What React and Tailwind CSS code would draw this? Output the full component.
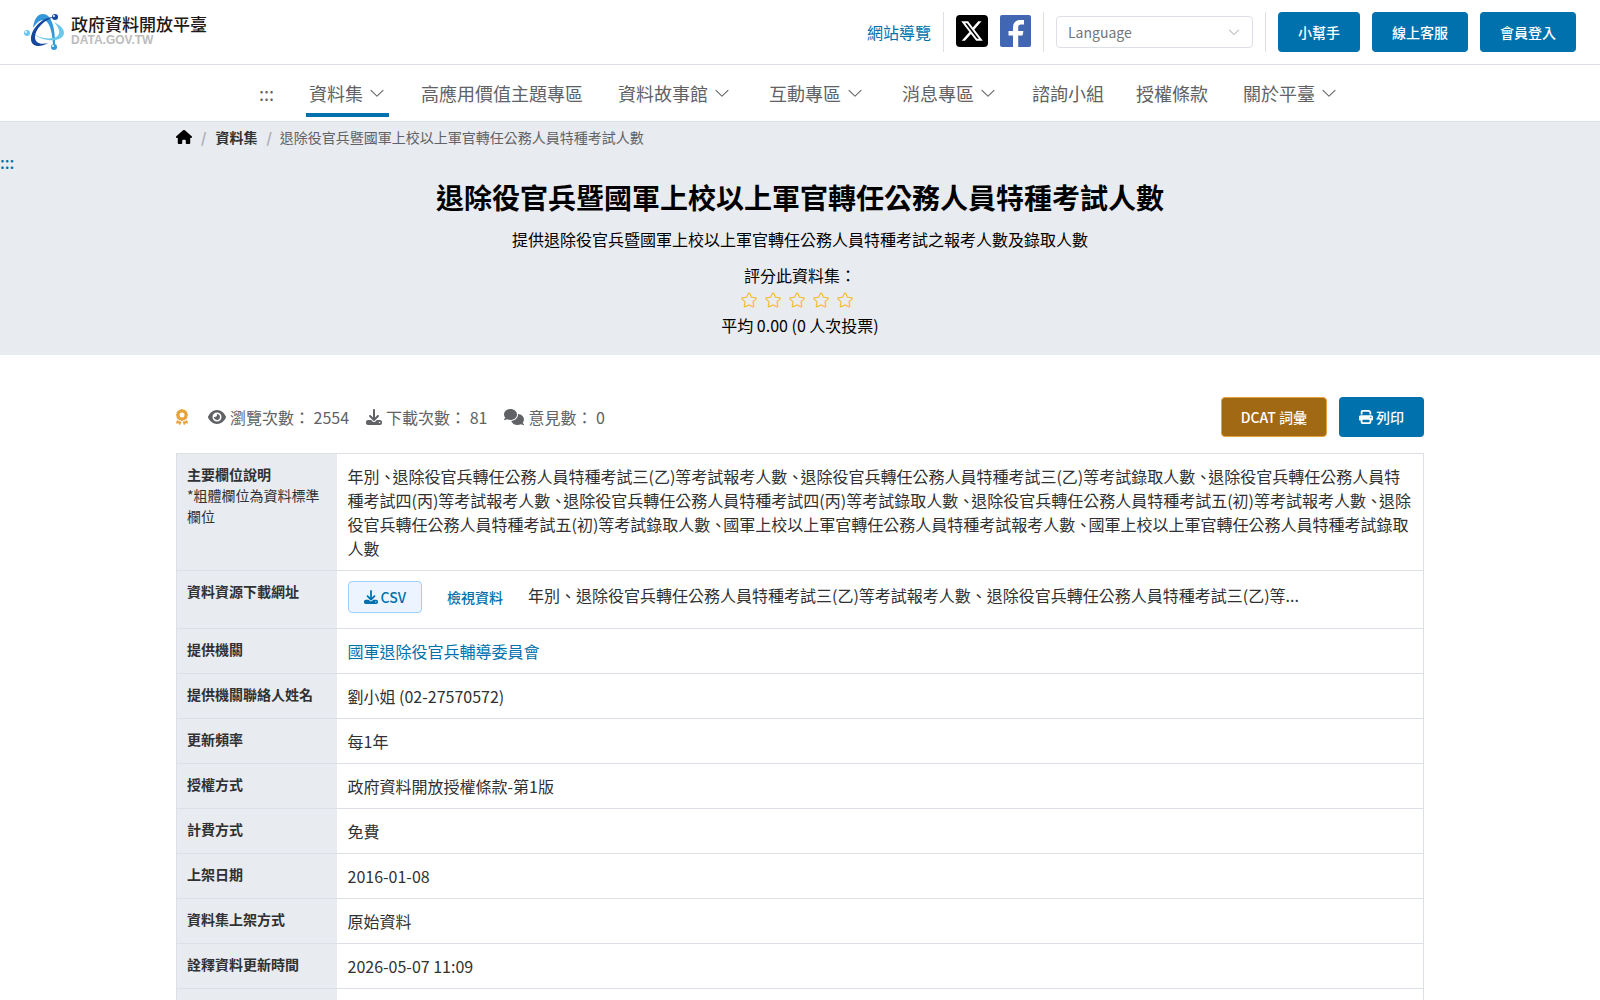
import React from 'react';
import { FaAward, FaComments, FaDownload, FaEye, FaHouse, FaPrint, FaXTwitter } from 'react-icons/fa6';

const navItems = [
  { label: '資料集', menu: true, active: true },
  { label: '高應用價值主題專區' },
  { label: '資料故事館', menu: true },
  { label: '互動專區', menu: true },
  { label: '消息專區', menu: true },
  { label: '諮詢小組' },
  { label: '授權條款' },
  { label: '關於平臺', menu: true },
];

const fields = [
  '年別',
  '退除役官兵轉任公務人員特種考試三(乙)等考試報考人數',
  '退除役官兵轉任公務人員特種考試三(乙)等考試錄取人數',
  '退除役官兵轉任公務人員特種考試四(丙)等考試報考人數',
  '退除役官兵轉任公務人員特種考試四(丙)等考試錄取人數',
  '退除役官兵轉任公務人員特種考試五(初)等考試報考人數',
  '退除役官兵轉任公務人員特種考試五(初)等考試錄取人數',
  '國軍上校以上軍官轉任公務人員特種考試報考人數',
  '國軍上校以上軍官轉任公務人員特種考試錄取人數',
];

const details = [
  { name: '提供機關聯絡人姓名', value: '劉小姐 (02-27570572)' },
  { name: '更新頻率', value: '每1年' },
  { name: '授權方式', value: '政府資料開放授權條款-第1版' },
  { name: '計費方式', value: '免費' },
  { name: '上架日期', value: '2016-01-08' },
  { name: '資料集上架方式', value: '原始資料' },
  { name: '詮釋資料更新時間', value: '2026-05-07 11:09' },
  { name: '', value: '' },
];

const ArrowDown = ({ className }) => (
  <svg className={className} viewBox="0 0 1024 1024" fill="currentColor" aria-hidden="true">
    <path d="M831.872 340.864 512 652.672 192.128 340.864a30.592 30.592 0 0 0-42.752 0 29.12 29.12 0 0 0 0 41.6L489.664 714.24a32 32 0 0 0 44.672 0l340.288-331.712a29.12 29.12 0 0 0 0-41.728 30.592 30.592 0 0 0-42.752 0z" />
  </svg>
);

const Star = () => (
  <svg className="w-[18px] h-[18px]" viewBox="0 0 1024 1024" fill="currentColor" aria-hidden="true">
    <path d="m512 747.84 228.16 119.936a6.4 6.4 0 0 0 9.28-6.72l-43.52-254.08 184.512-179.904a6.4 6.4 0 0 0-3.52-10.88l-255.104-37.12L517.76 147.904a6.4 6.4 0 0 0-11.52 0L392.192 379.072l-255.104 37.12a6.4 6.4 0 0 0-3.52 10.88L318.08 606.976l-43.584 254.08a6.4 6.4 0 0 0 9.28 6.72zM313.6 924.48a70.4 70.4 0 0 1-102.144-74.24l37.888-220.928L88.96 472.96A70.4 70.4 0 0 1 128 352.896l221.76-32.256 99.2-200.96a70.4 70.4 0 0 1 126.208 0l99.2 200.96 221.824 32.256a70.4 70.4 0 0 1 39.04 120.064L774.72 629.376l37.888 220.928a70.4 70.4 0 0 1-102.144 74.24L512 820.096l-198.4 104.32z" />
  </svg>
);

const LogoMark = () => (
  <svg className="w-10 h-[37px] mb-[2px]" viewBox="0 0 40 37" aria-hidden="true">
    <path d="M9 15C10 7 13 1 19 1c8 0 12 12 12 30h-2C28 17 25 7 19 7c-4 0-7 4-10 8Z" fill="#3498d8" />
    <path d="M8 20c7 5 17 7 24 4 5-3 4-8-2-15 8 4 12 9 9 14-5 7-22 5-31-3Z" fill="#6cc8ea" />
    <path d="M30 4C20 7 11 16 11 24c0 6 5 8 13 6-8 5-17 4-17-4C7 16 18 4 30 4Z" fill="#16479e" />
    <circle cx="31" cy="4" r="3" fill="#16479e" />
    <circle cx="3" cy="20" r="3" fill="#6cc8ea" />
    <circle cx="30" cy="34" r="3" fill="#3498d8" />
    <circle cx="30" cy="3" r="1" fill="#ffffff" />
    <circle cx="2" cy="19" r="1" fill="#ffffff" />
    <circle cx="29" cy="33" r="1" fill="#ffffff" />
  </svg>
);

const FacebookIcon = () => (
  <svg className="w-[31px] h-8" viewBox="0 0 31 32" aria-hidden="true">
    <rect width="31" height="32" rx="2" fill="#4267b2" />
    <path d="M13 32V20.500H8.500V16H13v-3.500C13 7.800 15.700 5 20 5h4v4.500h-2.800C19 9.500 18.200 10.600 18.200 12.500V16h5.200l-.8 4.500h-4.400V32Z" fill="#ffffff" />
  </svg>
);

const Divider = () => <span className="w-px h-10 bg-[#dcdfe6]"></span>;

const Row = ({ name, note, children }) => (
  <tr className="border border-[#dcdfe6]">
    <th scope="row" className="w-40 bg-[#e8ebf0] p-[10px] text-left align-top text-sm leading-[21px] font-bold">
      {name}
      {note && <div className="font-normal">{note}</div>}
    </th>
    <td className="py-[10px] pl-[11px] pr-[10px] align-top">{children}</td>
  </tr>
);

const App = () => {
  return (
    <div className="h-screen overflow-hidden bg-white text-base leading-6 text-[#303133] font-['Noto_Sans_CJK_TC',sans-serif]">
      <header>
        <div className="flex items-center justify-between h-[65px] px-6 border-b border-[#dcdfe6]">
          <a href="#" className="flex items-center gap-[7px]">
            <LogoMark />
            <span className="flex flex-col pb-[5px]">
              <span className="text-[17px] leading-5 font-medium text-[#231815]">政府資料開放平臺</span>
              <span className="text-xs leading-3 font-bold text-[#bcbcbc] font-['Liberation_Sans',sans-serif]">DATA.GOV.TW</span>
            </span>
          </a>
          <div className="flex items-center gap-3">
            <a href="#" className="text-[#0071ad]">網站導覽</a>
            <Divider />
            <a href="#" aria-label="X" className="flex items-center justify-center w-8 h-8 mb-[2px] rounded bg-black text-white">
              <FaXTwitter className="w-6 h-6" />
            </a>
            <a href="#" aria-label="Facebook" className="mb-[2px]">
              <FacebookIcon />
            </a>
            <Divider />
            <div className="grid items-center">
              <select aria-label="Language" className="col-start-1 row-start-1 appearance-none w-[197px] h-8 px-[11px] rounded border border-[#dcdfe6] bg-white text-sm text-[#73767a]">
                <option>Language</option>
              </select>
              <ArrowDown className="col-start-1 row-start-1 justify-self-end w-[14px] h-[14px] mr-3 text-[#a8abb2] pointer-events-none" />
            </div>
            <Divider />
            <button className="h-10 px-5 rounded bg-[#0071ad] text-sm font-medium text-white">小幫手</button>
            <button className="h-10 px-5 rounded bg-[#0071ad] text-sm font-medium text-white">線上客服</button>
            <button className="h-10 px-5 rounded bg-[#0071ad] text-sm font-medium text-white">會員登入</button>
          </div>
        </div>

        <nav className="flex items-end justify-center gap-8 h-[57px] pb-1 border-b border-[#dcdfe6] text-lg text-[#606266]">
          <a href="#" className="pb-[10px] leading-7">:::</a>
          {navItems.map((item) => (
            <a
              key={item.label}
              href="#"
              className={`flex items-center border-b-4 pb-[6px] leading-7 ${item.menu ? 'px-[3px]' : ''} ${
                item.active ? 'border-[#0071ad]' : 'border-transparent'
              }`}
            >
              {item.label}
              {item.menu && <ArrowDown className="w-[18px] h-[18px] ml-[5px]" />}
            </a>
          ))}
        </nav>
      </header>

      {/* Title area */}
      <section className="bg-[#e8ebf0] pb-[18px] text-black">
        <div className="mx-auto flex max-w-[1248px] items-center text-sm h-[30px]">
          <a href="#" aria-label="首頁"><FaHouse className="w-4 h-4" /></a>
          <span className="mx-[9px] font-bold text-[#a8abb2]">/</span>
          <a href="#" className="font-bold text-[#303133]">資料集</a>
          <span className="ml-[9px] mr-2 font-bold text-[#a8abb2]">/</span>
          <span className="text-[#606266]">退除役官兵暨國軍上校以上軍官轉任公務人員特種考試人數</span>
        </div>
        <a href="#" className="block w-4 h-5 leading-5 font-medium text-[#0071ad]">:::</a>
        <div className="text-center">
          <h1 className="mt-1 mb-[9px] text-[28px] leading-[42px] font-bold">退除役官兵暨國軍上校以上軍官轉任公務人員特種考試人數</h1>
          <p>提供退除役官兵暨國軍上校以上軍官轉任公務人員特種考試之報考人數及錄取人數</p>
          <p className="mt-3">評分此資料集：</p>
          <div className="flex justify-center h-[26px] items-center text-[#f7ba2a]">
            {[1, 2, 3, 4, 5].map((n) => (
              <button key={n} aria-label={`${n} 星`} className="mr-[6px]"><Star /></button>
            ))}
          </div>
          <p>平均 0.00 (0 人次投票)</p>
        </div>
      </section>

      <main className="mx-auto max-w-[1248px] pt-[42px]">
        <div className="flex items-center justify-between mb-4">
          <div className="flex items-center gap-[17px] text-[#606266]">
            <FaAward className="w-3 h-4 mr-[3px] text-[#e6a23c]" />
            <span className="flex items-center gap-1"><FaEye className="w-[18px] h-4" />瀏覽次數： 2554</span>
            <span className="flex items-center gap-1"><FaDownload className="w-4 h-4" />下載次數： 81</span>
            <span className="flex items-center gap-1"><FaComments className="w-5 h-4" />意見數： 0</span>
          </div>
          <div className="flex gap-3 text-sm font-medium text-white">
            <button className="h-10 px-[19px] rounded border border-[#e6a23c] bg-[#a16914]">DCAT 詞彙</button>
            <button className="flex items-center gap-[3px] h-10 px-5 rounded bg-[#0071ad]"><FaPrint className="w-[14px] h-[14px]" />列印</button>
          </div>
        </div>

        <table className="w-full border-collapse">
          <tbody>
            <Row name="主要欄位說明" note="*粗體欄位為資料標準欄位">
              {fields.map((field, i) => (
                <React.Fragment key={field}>
                  {field}
                  {i < fields.length - 1 && <span className="ml-1 mr-px [font-feature-settings:'halt']">、</span>}
                </React.Fragment>
              ))}
            </Row>
            <Row name="資料資源下載網址">
              <div className="flex items-start pb-[5px]">
                <button className="flex items-center gap-[3px] h-8 px-[15px] rounded border border-[#a0cfff] bg-[#ecf5ff] text-sm font-medium text-[#0071ad]">
                  <FaDownload className="w-[14px] h-[14px]" />CSV
                </button>
                <button className="h-8 ml-[25px] text-sm font-medium text-[#0071ad]">檢視資料</button>
                <span className="ml-[25px] pt-[2px]">年別、退除役官兵轉任公務人員特種考試三(乙)等考試報考人數、退除役官兵轉任公務人員特種考試三(乙)等...</span>
              </div>
            </Row>
            <Row name="提供機關">
              <a href="#" className="text-[#0071ad]">國軍退除役官兵輔導委員會</a>
            </Row>
            {details.map((row) => (
              <Row key={row.name} name={row.name}>{row.value}</Row>
            ))}
          </tbody>
        </table>
      </main>
    </div>
  );
};

export default App;
